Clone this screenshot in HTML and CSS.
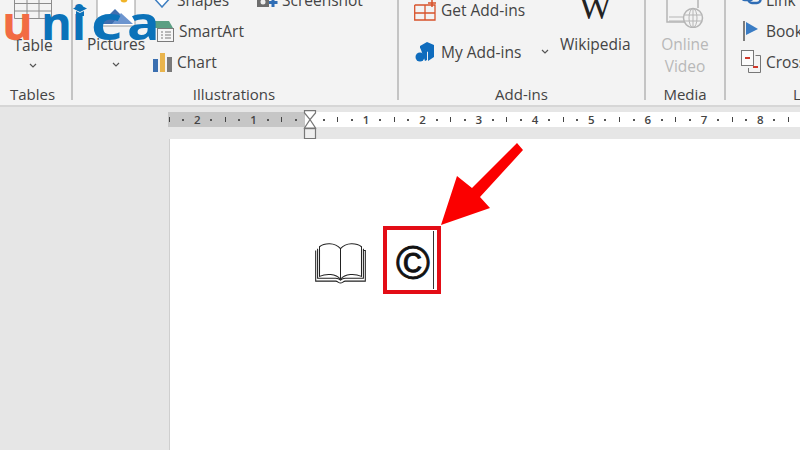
FILE: index.html
```html
<!DOCTYPE html>
<html lang="en">
<head>
  <meta charset="UTF-8" />
  <title>Word - Insert tab</title>
  <link rel="stylesheet" href="styles.css">
</head>
<body>
  <!-- watermark logo -->
  <div class="logo">
    <span class="logo-u">u</span><span class="logo-n">n</span><span class="logo-i">i</span><span class="logo-c">c</span><span class="logo-a">a</span>
    <svg class="logo-cap" width="14" height="11" viewBox="0 0 14 11"><path d="M7 0 14 3.500 7 7 0 3.500Z" fill="#0b72b9"/><path d="M3 6 7 8 11 6V11H3Z" fill="#0b72b9"/></svg>
  </div>

  <div class="ribbon">
    <section class="group group-tables">
      <div class="group-body">
        <div class="big-tool">
          <svg class="tool-icon" width="38" height="26" viewBox="0 0 38 26" fill="none" stroke="#8c8c8c"><path d="M.5 0V22.500H37.500V0M.5 7.500H37.500M.5 15H37.500M13 0V22.500M25 0V22.500"/></svg>
          <span>Table</span>
          <svg class="chevron" width="8" height="5" viewBox="0 0 8 5"><path d="M1 1 4 4 7 1" fill="none" stroke="#555" stroke-width="1.200"/></svg>
        </div>
      </div>
      <div class="group-label">Tables</div>
    </section>

    <section class="group group-illustrations">
      <div class="group-body">
        <div class="big-tool tool-pictures">
          <svg class="tool-icon" width="40" height="28" viewBox="0 0 40 28">
            <rect x="1" y="-4" width="38" height="31" fill="#fff" stroke="#9a9a9a"/>
            <circle cx="28" cy="0" r="3.500" fill="#f0b429"/>
            <path d="M4 25 19 10 27 18 24 25Z" fill="#3f6fb0"/>
            <path d="M16 25 25 14 37 25Z" fill="#6d95cf"/>
          </svg>
          <span>Pictures</span>
          <svg class="chevron" width="8" height="5" viewBox="0 0 8 5"><path d="M1 1 4 4 7 1" fill="none" stroke="#555" stroke-width="1.200"/></svg>
        </div>
        <div class="tool-col">
          <div class="row">
            <svg width="22" height="16" viewBox="0 0 22 16"><path d="M2 5 11 15 20 5 14 0H8Z" fill="#fff" stroke="#3f7fc1" stroke-width="1.500"/></svg>
            <span>Shapes</span>
          </div>
          <div class="row">
            <svg width="24" height="22" viewBox="0 0 24 22">
              <path d="M1 8 4 1H18L22 8Z" fill="#5b9f83"/>
              <rect x="6.500" y="8.500" width="16" height="13" fill="#f6f6f6" stroke="#7a7a7a"/>
              <path d="M10 12H12M14 12H20M10 15H12M14 15H20M10 18H12M14 18H20" stroke="#7a7a7a"/>
            </svg>
            <span>SmartArt</span>
          </div>
          <div class="row">
            <svg width="22" height="20" viewBox="0 0 22 20">
              <rect x="2" y="7" width="5" height="13" fill="#3a6fb0"/>
              <rect x="9" y="1" width="5" height="19" fill="#e9b44c"/>
              <rect x="16" y="5" width="5" height="15" fill="#7a7a7a"/>
            </svg>
            <span>Chart</span>
          </div>
        </div>
        <div class="tool-col tool-col-shot">
          <div class="row">
            <svg width="22" height="16" viewBox="0 0 22 16">
              <path d="M1 5H4L5 3H9L10 5H13V15H1Z" fill="#6d6d6d"/>
              <circle cx="7" cy="10" r="2.500" fill="#eee"/>
              <path d="M17 6V15M13 10.500H21.500" stroke="#2f6db5" stroke-width="3"/>
            </svg>
            <span>Screenshot</span>
          </div>
        </div>
      </div>
      <div class="group-label">Illustrations</div>
    </section>

    <section class="group group-addins">
      <div class="group-body">
        <div class="addin-col">
          <div class="row addin-row">
            <svg width="22" height="22" viewBox="0 0 22 22" fill="none" stroke="#d8532b" stroke-width="1.300"><path d="M.7 6V21H21V6H15M.7 6H15M11 6V21M.7 14H21"/><path d="M18 0V8M14 4H22" stroke-width="1.500"/></svg>
            <span>Get Add-ins</span>
          </div>
          <div class="row addin-row">
            <svg width="22" height="22" viewBox="0 0 22 22">
              <path d="M6 5 13 1 20 4V16L14 20V11L6 7Z" fill="#0f6cbd"/>
              <circle cx="6" cy="16" r="4.500" fill="#0f6cbd"/>
              <path d="M6 6 13 10V19L11 20" fill="#0f6cbd"/>
            </svg>
            <span>My Add-ins</span>
            <svg class="chevron-side" width="8" height="5" viewBox="0 0 8 5"><path d="M1 1 4 4 7 1" fill="none" stroke="#555" stroke-width="1.200"/></svg>
          </div>
        </div>
        <div class="big-tool tool-wiki">
          <div class="wiki-w">W</div>
          <span>Wikipedia</span>
        </div>
      </div>
      <div class="group-label">Add-ins</div>
    </section>

    <section class="group group-media">
      <div class="group-body">
        <div class="big-tool tool-video">
          <svg class="tool-icon" width="40" height="28" viewBox="0 0 40 28" fill="none" stroke="#b5b5b5">
            <path d="M2 0V22H22M33 0V8" stroke-width="1.500"/>
            <path d="M4 17H22M4 21H22" />
            <circle cx="28" cy="18" r="9.500" fill="#f3f3f3" stroke-width="1.500"/>
            <ellipse cx="28" cy="18" rx="4" ry="9.500"/>
            <path d="M19 15H37M19 21H37M28 8.500V27.500"/>
          </svg>
          <span>Online</span>
          <span>Video</span>
        </div>
      </div>
      <div class="group-label">Media</div>
    </section>

    <section class="group group-links">
      <div class="group-body">
        <div class="tool-col">
          <div class="row">
            <svg width="22" height="16" viewBox="0 0 22 16" fill="none" stroke="#2f6db5" stroke-width="2.500"><rect x="1.500" y="1" width="12" height="7" rx="3.500"/><rect x="8.500" y="4" width="12" height="7" rx="3.500"/></svg>
            <span>Link</span>
          </div>
          <div class="row">
            <svg width="22" height="20" viewBox="0 0 22 20"><path d="M4 0V20" stroke="#555" stroke-width="1.500"/><path d="M6 1 18 8 6 14Z" fill="#3a7cc4"/></svg>
            <span>Bookmark</span>
          </div>
          <div class="row">
            <svg width="22" height="24" viewBox="0 0 22 24" fill="none" stroke="#777">
              <rect x="1.500" y=".5" width="12" height="15" fill="#fbfbfb"/>
              <path d="M15.500 5.500H20.500V22.500H8.500V18"/>
              <path d="M5 8H10" stroke="#d0392b" stroke-width="2"/>
              <path d="M13 17H18" stroke="#d0392b" stroke-width="2"/>
            </svg>
            <span>Cross-reference</span>
          </div>
        </div>
      </div>
      <div class="group-label">Links</div>
    </section>
  </div>

  <main class="workspace">
    <div class="ruler">
      <i class="tick"></i><i class="dot"></i><b>2</b><i class="dot"></i><i class="tick"></i><i class="dot"></i><b>1</b><i class="dot"></i><i class="tick"></i><i class="dot"></i>
      <div class="indent">
        <svg width="14" height="30" viewBox="0 0 14 30" fill="none" stroke="#777" stroke-width="1.200"><path d="M1.500.6H12.500V3L7 9.500 12.500 18H1.500L7 9.500 1.500 3Z" fill="#fff"/><rect x="1.500" y="18.600" width="11" height="10" fill="#eee"/></svg>
      </div>
      <i class="dot"></i><i class="tick"></i><i class="dot"></i><b>1</b>
      <i class="dot"></i><i class="tick"></i><i class="dot"></i><b>2</b>
      <i class="dot"></i><i class="tick"></i><i class="dot"></i><b>3</b>
      <i class="dot"></i><i class="tick"></i><i class="dot"></i><b>4</b>
      <i class="dot"></i><i class="tick"></i><i class="dot"></i><b>5</b>
      <i class="dot"></i><i class="tick"></i><i class="dot"></i><b>6</b>
      <i class="dot"></i><i class="tick"></i><i class="dot"></i><b>7</b>
      <i class="dot"></i><i class="tick"></i><i class="dot"></i><b>8</b>
      <i class="dot"></i><i class="tick"></i><i class="dot"></i>
    </div>

    <div class="page">
      <div class="doc-line">
        <svg class="book" width="53" height="42" viewBox="0 0 54 44" fill="#fff" stroke="#222" stroke-width="1.100">
          <path d="M1 9V41H22C24 41 25 43 27 43 29 43 30 41 32 41H53V9H50"/>
          <path d="M3 7V38H22C24 38 26 39 27 40 28 39 30 38 32 38H51V7"/>
          <path d="M5 36V5C10 1 21 0 27 7 33 0 44 1 49 5V36C42 33 32 33 27 39 22 33 12 33 5 36Z"/>
          <path d="M27 7V39"/>
        </svg>
        <div class="callout">
          <span class="symbol">©</span><span class="caret"></span>
        </div>
      </div>
    </div>
  </main>

  <!-- red arrow pointing at the symbol -->
  <svg class="arrow" width="84" height="84" viewBox="0 0 84 84"><path d="M77 0 83 7 40 54 50 65 1 82 17 33 32 45Z" fill="#fb0000"/></svg>
</body>
</html>
```

FILE: styles.css
```css
* {
  margin: 0;
  padding: 0;
  box-sizing: border-box;
}

html, body {
  width: 800px;
  height: 450px;
  overflow: hidden;
  background: #e6e6e6;
  font-family: "Open Sans", sans-serif;
  color: #444;
}

body {
  position: relative;
  display: flex;
  flex-direction: column;
}

/* logo + arrow lie over the screenshot */
.logo {
  position: absolute;
  top: -10px;
  left: 2px;
  z-index: 5;
  display: flex;
  font-size: 47px;
  font-weight: 700;
  line-height: 64px;
  color: #0b72b9;
  white-space: nowrap;
}

.logo span {
  display: block;
  transform-origin: left center;
}

.logo-u {
  color: #f26b43;
  margin-right: 8px;
}

.logo-i { margin-right: 5px; }

.logo-c {
  transform: scaleX(1.300);
  margin-right: 12px;
}

.logo-a {
  transform: scaleX(1.150);
}

.logo-cap {
  position: absolute;
  top: 15px;
  left: 71px;
}

.arrow {
  position: absolute;
  top: 143px;
  left: 440px;
  z-index: 5;
}

/* ribbon */
.ribbon {
  display: flex;
  flex: 0 0 107px;
  height: 107px;
  overflow: hidden;
  background: #f3f3f3;
  border-bottom: 2px solid #d6d6d6;
  font-size: 15.500px;
  line-height: 20px;
}

.group {
  display: flex;
  flex-direction: column;
  flex: 0 0 auto;
  height: 100px;
  border-right: 2px solid #c4c4c4;
}

.group-tables { width: 73px; }
.group-illustrations { width: 326px; }
.group-addins { width: 247px; }
.group-media { width: 80px; }
.group-links { width: 170px; border-right: 0; }

.group-body {
  display: flex;
  flex: 1;
  min-height: 0;
}

.group-label {
  flex: 0 0 20px;
  margin-top: -4px;
  margin-bottom: -4px;
  text-align: center;
  color: #444;
  font-size: 15px;
  font-weight: 500;
}

.group-tables .group-label { padding-right: 6px; }
.group-illustrations .group-label { padding-right: 2px; }

.big-tool {
  display: flex;
  flex-direction: column;
  align-items: center;
  white-space: nowrap;
}

.tool-icon {
  flex: none;
  margin-bottom: 6px;
}

.group-tables .big-tool {
  width: 38px;
  margin-left: 14px;
  margin-top: -4px;
}

.group-tables .tool-icon { margin-bottom: 13px; }

.tool-pictures {
  width: 40px;
  margin-left: 23px;
  margin-top: -1px;
  flex: none;
}

.tool-pictures .tool-icon { margin-bottom: 7px; }

.chevron {
  margin-top: 8px;
  flex: none;
}

.tool-col {
  display: flex;
  flex-direction: column;
  margin-top: -16px;
  margin-left: 15px;
  flex: none;
}

.row {
  display: flex;
  align-items: center;
  gap: 4px;
  height: 31px;
  white-space: nowrap;
}

.group-illustrations .tool-col { margin-left: 15px; }
.group-illustrations .tool-col-shot { margin-left: 12px; }
.group-links .tool-col { margin-left: 14px; }

.addin-col {
  display: flex;
  flex-direction: column;
  flex: none;
  gap: 12px;
  margin: -6px 0 0 15px;
}

.addin-row { gap: 5px; }
.addin-row + .addin-row { margin-top: -1px; }

.chevron-side { margin-left: 15px; }

.tool-wiki {
  width: 72px;
  margin-left: 10px;
  margin-top: -9px;
  flex: none;
}

.wiki-w {
  font-family: "Liberation Serif", serif;
  font-size: 35px;
  line-height: 34px;
  color: #222;
  margin-bottom: 9px;
}

.tool-video {
  width: 78px;
  color: #b8b8b8;
  line-height: 22px;
}

.tool-video .tool-icon { margin-bottom: 5px; }

/* ruler and page */
.workspace {
  display: flex;
  flex-direction: column;
  flex: 1;
  padding: 5px 0 0 168px;
  min-height: 0;
}

.ruler {
  display: flex;
  align-items: center;
  flex: 0 0 14px;
  overflow: visible;
  background: linear-gradient(to right, #c6c6c6 137px, #fff 137px);
  font-size: 11.500px;
  color: #444;
}

.ruler > * {
  flex: 0 0 14.080px;
  display: flex;
  justify-content: center;
  align-items: center;
  font-style: normal;
  font-weight: 600;
}

.ruler > :first-child { margin-left: -6px; }

.tick::before {
  content: "";
  width: 1px;
  height: 5px;
  background: #444;
}

.dot::before {
  content: "";
  width: 2px;
  height: 2px;
  background: #555;
}

.indent {
  height: 14px;
  align-items: flex-start !important;
}

.indent svg {
  flex: none;
  margin-top: -3px;
}

.page {
  flex: 1;
  margin: 12px 0 0 1px;
  background: #fff;
  border-left: 1px solid #cfcfcf;
}

.doc-line {
  display: flex;
  align-items: center;
  gap: 16px;
  padding: 87px 0 0 144px;
}

.book { flex: none; margin-top: 5px; }

.callout {
  display: flex;
  align-items: center;
  width: 58px;
  height: 68px;
  padding-left: 9px;
  border: 4px solid #e30d16;
}

.symbol {
  font-family: "Liberation Sans", sans-serif;
  font-size: 46px;
  line-height: 56px;
  padding-top: 6px;
  color: #111;
  -webkit-text-stroke: 0.9px #111;
}

.caret {
  width: 1.500px;
  height: 58px;
  margin-left: 3px;
  background: #333;
}
```
